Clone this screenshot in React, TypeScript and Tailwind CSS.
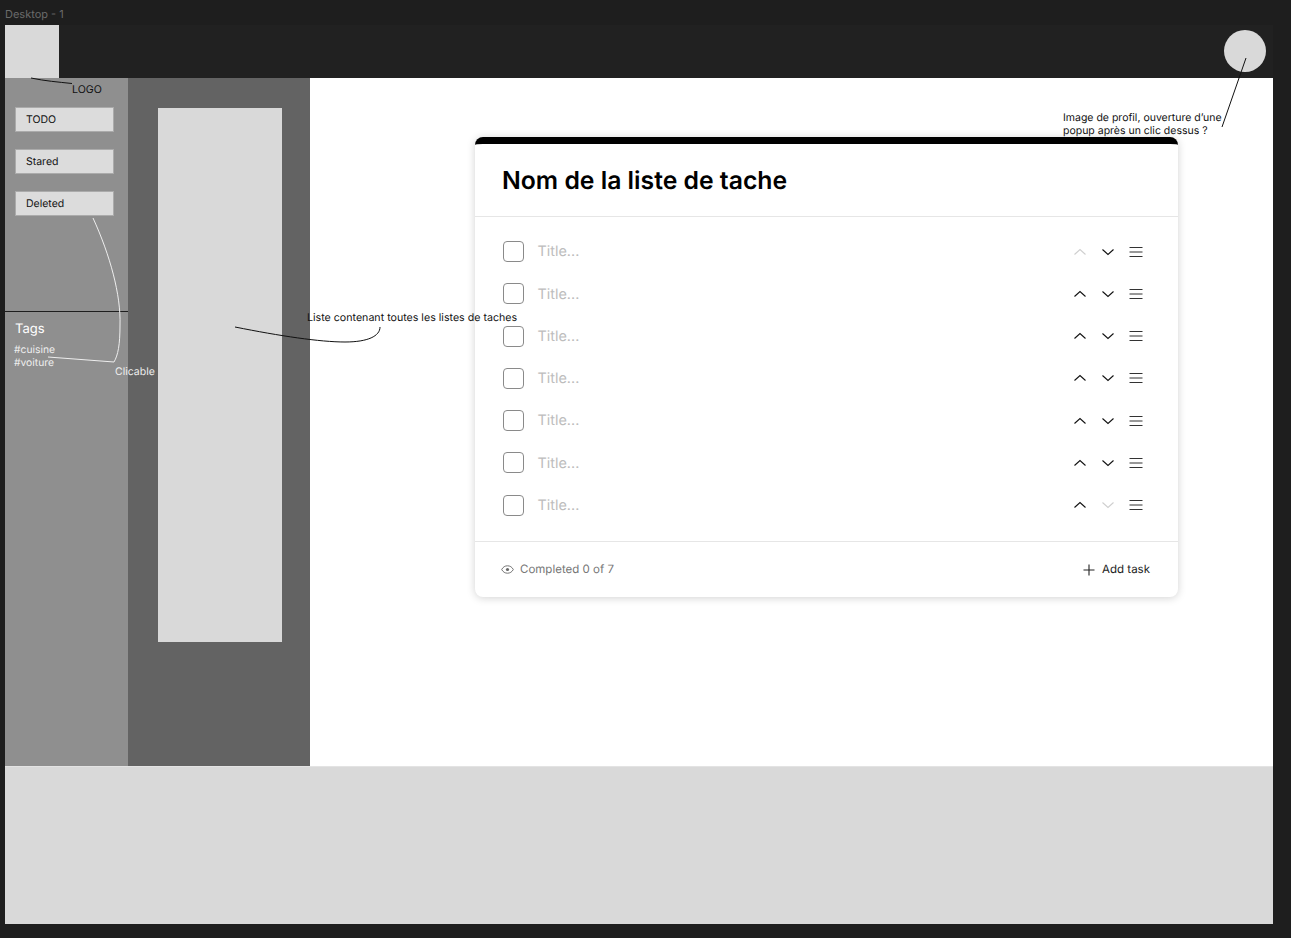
const rows = [
  { upOff: true, downOff: false },
  { upOff: false, downOff: false },
  { upOff: false, downOff: false },
  { upOff: false, downOff: false },
  { upOff: false, downOff: false },
  { upOff: false, downOff: false },
  { upOff: false, downOff: true },
];

const navItems = ['TODO', 'Stared', 'Deleted'];

function Chevron({ up, off }: { up?: boolean; off?: boolean }) {
  return (
    <svg width="14" height="14" viewBox="0 0 14 14" fill="none" className={off ? 'text-[#cfcfcf]' : 'text-[#111]'}>
      <path d={up ? 'M1.5 9.5 7 4.5l5.5 5' : 'M1.5 4.5 7 9.5l5.5-5'} stroke="currentColor" strokeWidth="1.1" />
    </svg>
  );
}

function Burger() {
  return (
    <svg width="14" height="14" viewBox="0 0 14 14" fill="none" className="text-[#333]">
      <path d="M0.5 2.5h13M0.5 7h13M0.5 11.5h13" stroke="currentColor" strokeWidth="1" />
    </svg>
  );
}

function TaskRow({ upOff, downOff }: { upOff: boolean; downOff: boolean }) {
  return (
    <div className="flex h-[42.25px] items-center pl-[27.5px] pr-[35px]">
      <div className="h-[21px] w-[21px] rounded-[4px] border border-[#8a8a8a]" />
      <span className="ml-[14px] flex-1 pt-[1px] text-[14.4px] text-[#bdbdbd]">Title...</span>
      <div className="flex items-center gap-[14px]">
        <Chevron up off={upOff} />
        <Chevron off={downOff} />
        <Burger />
      </div>
    </div>
  );
}

function TaskCard() {
  return (
    <div className="w-[703px] overflow-hidden rounded-[8px] border-t-[7px] border-black bg-white shadow-[0_1px_8px_rgba(0,0,0,0.18)]">
      <div className="flex h-[73px] items-center border-b border-[#e6e6e6] pl-[27px] pt-[1px]">
        <h1 className="text-[24.75px] font-semibold text-black">Nom de la liste de tache</h1>
      </div>
      <div className="border-b border-[#e6e6e6] pb-[14.5px] pt-[13.5px]">
        {rows.map((row, i) => (
          <TaskRow key={i} upOff={row.upOff} downOff={row.downOff} />
        ))}
      </div>
      <div className="flex h-[55px] items-center justify-between pl-[26px] pr-[28px] pt-[1px]">
        <div className="flex items-center gap-[6px] text-[11.5px] text-[#757575]">
          <svg width="13" height="13" viewBox="0 0 13 13" fill="none" className="text-[#666]">
            <path d="M0.7 6.5C2 4 4 2.8 6.5 2.8S11 4 12.3 6.5C11 9 9 10.2 6.5 10.2S2 9 0.7 6.5Z" stroke="currentColor" strokeWidth="0.9" />
            <circle cx="6.5" cy="6.5" r="1.6" fill="currentColor" />
          </svg>
          Completed 0 of 7
        </div>
        <div className="flex items-center gap-[7px] text-[11.5px] text-[#222]">
          <svg width="12" height="12" viewBox="0 0 12 12" fill="none">
            <path d="M6 0.5v11M0.5 6h11" stroke="#222" strokeWidth="1.1" />
          </svg>
          Add task
        </div>
      </div>
    </div>
  );
}

export default function App() {
  return (
    <div className="relative h-[938px] w-[1291px] overflow-hidden bg-[#1e1e1e] pl-[5px] font-['Inter',sans-serif] [text-rendering:geometricPrecision]">
      <div className="flex h-[25px] items-start pt-[8px] text-[11px] leading-[13px] text-[#6b6b6b]">Desktop - 1</div>
      <div className="w-[1268px]">
        {/* Header */}
        <header className="flex h-[53px] items-start justify-between bg-[#212121] pr-[7px]">
          <div className="h-[53px] w-[54px] bg-[#d9d9d9]" />
          <div className="mt-[5px] h-[42px] w-[42px] rounded-full bg-[#d9d9d9]" />
        </header>

        <div className="flex h-[688px]">
          {/* Sidebar */}
          <aside className="flex w-[123px] flex-col bg-[#8f8f8f]">
            <div className="flex h-[234px] flex-col gap-[17px] border-b border-[#1e1e1e] pl-[10px] pt-[29px]">
              {navItems.map(item => (
                <div key={item} className="flex h-[25px] w-[99px] items-center border border-[#ababab] bg-[#dcdcdc] pl-[10px] text-[10.5px] text-[#111]">
                  {item}
                </div>
              ))}
            </div>
            <div className="pl-[10px] pt-[9px] text-[13px] leading-4 text-white">Tags</div>
            <div className="mt-[7px] pl-[9px] text-[10.3px] leading-[13px] text-[#eeeeee]">
              <div>#cuisine</div>
              <div>#voiture</div>
            </div>
          </aside>

          {/* All lists */}
          <div className="w-[182px] bg-[#636363] pl-[30px] pt-[30px]">
            <div className="h-[534px] w-[124px] bg-[#d9d9d9]" />
          </div>

          {/* Main */}
          <main className="flex-1 bg-white pl-[165px] pt-[59px]">
            <TaskCard />
          </main>
        </div>

        <div className="h-[158px] border-t border-[#e3e3e3] bg-[#d9d9d9]" />
      </div>

      {/* Annotations */}
      <span className="absolute left-[72px] top-[83px] text-[10.65px] leading-[13px] text-[#111]">LOGO</span>
      <span className="absolute left-[115px] top-[365px] text-[10.5px] leading-[13px] text-[#eeeeee]">Clicable</span>
      <span className="absolute left-[307px] top-[311px] text-[10.65px] leading-[13px] text-[#111]">Liste contenant toutes les listes de taches</span>
      <span className="absolute left-[1063px] top-[111px] text-[10.5px] leading-[13px] text-[#111]">
        Image de profil, ouverture d’une
        <br />
        popup après un clic dessus ?
      </span>
      <svg className="absolute left-0 top-0" width="1291" height="938" viewBox="0 0 1291 938" fill="none">
        <path d="M31 78C45 81 58 82 72 83.5" stroke="#111" strokeWidth="1" />
        <path d="M93 218C110 255 121 295 120 325C120 345 118 355 114 362L48 357" stroke="#eeeeee" strokeWidth="1" />
        <path d="M235 327C280 336 320 342 345 342C368 342 380 336 380 327" stroke="#111" strokeWidth="1" />
        <path d="M1246 58L1222 127" stroke="#111" strokeWidth="1" />
      </svg>
    </div>
  );
}
